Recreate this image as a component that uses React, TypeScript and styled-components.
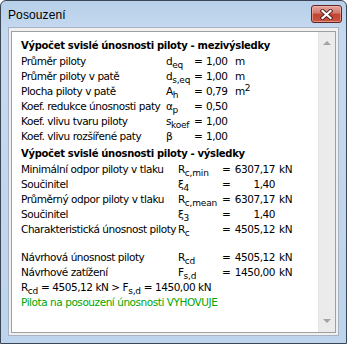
import React from 'react';
import styled, {createGlobalStyle} from "styled-components";

const GlobalStyle = createGlobalStyle`
  html, body {
    margin: 0;
    padding: 0;
    background: #ffffff;
  }
`

const Sub = styled.sub`
  font-size: 9px;
  letter-spacing: -0.2px;
  vertical-align: -3px;
  line-height: 0;
`

const Sup = styled.sup`
  font-size: 9px;
  vertical-align: 4px;
  line-height: 0;
`

type Row = {
    label: string
    sym: React.ReactNode
    value: string
    unit?: React.ReactNode
}

const mezi: Row[] = [
    {label: 'Průměr piloty', sym: <>d<Sub>eq</Sub></>, value: '1,00', unit: 'm'},
    {label: 'Průměr piloty v patě', sym: <>d<Sub>s,eq</Sub></>, value: '1,00', unit: 'm'},
    {label: 'Plocha piloty v patě', sym: <>A<Sub>h</Sub></>, value: '0,79', unit: <>m<Sup>2</Sup></>},
    {label: 'Koef. redukce únosnosti paty', sym: <>α<Sub>p</Sub></>, value: '0,50'},
    {label: 'Koef. vlivu tvaru piloty', sym: <>s<Sub>koef</Sub></>, value: '1,00'},
    {label: 'Koef. vlivu rozšířené paty', sym: 'β', value: '1,00'},
]

const vysledky: Row[] = [
    {label: 'Minimální odpor piloty v tlaku', sym: <>R<Sub>c,min</Sub></>, value: '6307,17', unit: 'kN'},
    {label: 'Součinitel', sym: <>ξ<Sub>4</Sub></>, value: '1,40'},
    {label: 'Průměrný odpor piloty v tlaku', sym: <>R<Sub>c,mean</Sub></>, value: '6307,17', unit: 'kN'},
    {label: 'Součinitel', sym: <>ξ<Sub>3</Sub></>, value: '1,40'},
    {label: 'Charakteristická únosnost piloty', sym: <>R<Sub>c</Sub></>, value: '4505,12', unit: 'kN'},
]

const navrh: Row[] = [
    {label: 'Návrhová únosnost piloty', sym: <>R<Sub>cd</Sub></>, value: '4505,12', unit: 'kN'},
    {label: 'Návrhové zatížení', sym: <>F<Sub>s,d</Sub></>, value: '1450,00', unit: 'kN'},
]

const Rows = ({rows, wide}: { rows: Row[], wide?: boolean }) => (
    <Grid $wide={wide}>
        {rows.map((r, i) => (
            <React.Fragment key={i}>
                <Label>{r.label}</Label>
                <Sym>{r.sym}</Sym>
                <Eq>=</Eq>
                <Value $wide={wide}>{r.value}</Value>
                <Unit>{r.unit}</Unit>
            </React.Fragment>
        ))}
    </Grid>
)

const CloseIcon = () => (
    <svg width="13" height="11" viewBox="0 0 13 11">
        <path d="M2.5 2 L10.5 9 M10.5 2 L2.5 9" stroke="#5a2020" strokeWidth="4" strokeLinecap="square"/>
        <path d="M2.5 2 L10.5 9 M10.5 2 L2.5 9" stroke="#ffffff" strokeWidth="2.2" strokeLinecap="square"/>
    </svg>
)

const App = () => {
    return (
        <>
            <GlobalStyle/>
            <Window>
                <TitleBar>
                    <Title>Posouzení</Title>
                    <CloseButton><CloseIcon/></CloseButton>
                </TitleBar>
                <Client>
                    <TextBox>
                        <Content>
                            <Heading>Výpočet svislé únosnosti piloty - mezivýsledky</Heading>
                            <Rows rows={mezi}/>
                            <Heading $mt={3}>Výpočet svislé únosnosti piloty - výsledky</Heading>
                            <Rows rows={vysledky} wide/>
                            <Spacer/>
                            <Rows rows={navrh} wide/>
                            <Line $mt={1}>
                                R<Sub>cd</Sub> = 4505,12 kN &gt; F<Sub>s,d</Sub> = 1450,00 kN
                            </Line>
                            <Line $green>Pilota na posouzení únosnosti VYHOVUJE</Line>
                        </Content>
                        <ScrollBar>
                            <Arrow/>
                            <Arrow $down/>
                        </ScrollBar>
                    </TextBox>
                </Client>
            </Window>
        </>
    );
};

export default App;

// ---------------------------
const Window = styled.div`
  box-sizing: border-box;
  width: 347px;
  height: 344px;
  border: 1px solid #3a4656;
  border-radius: 6px 6px 0 0;
  background: linear-gradient(#b7cfe9, #c6daef 30px, #bed4ec);
  display: flex;
  flex-direction: column;
  padding: 0 7px 7px;
  font-family: "DejaVu Sans", "Liberation Sans", sans-serif;
`

const TitleBar = styled.div`
  height: 26px;
  flex: none;
  display: flex;
  align-items: flex-start;
  justify-content: space-between;
`

const Title = styled.div`
  font-family: "Liberation Sans", Arial, sans-serif;
  font-size: 12px;
  color: #000;
  margin-top: 7px;
  letter-spacing: 0.1px;
`

const CloseButton = styled.div`
  box-sizing: border-box;
  width: 31px;
  height: 18px;
  margin: 4px -3px 0 0;
  border: 1px solid #5e2424;
  border-radius: 3px;
  background: linear-gradient(#e5a69d, #d2776b 45%, #c2432f 50%, #c9553f);
  display: flex;
  align-items: center;
  justify-content: center;
  box-shadow: inset 0 0 0 1px rgba(255, 200, 190, 0.5);
`

const Client = styled.div`
  flex: 1;
  box-sizing: border-box;
  background: #f0f0f0;
  border: 1px solid #a7b3c2;
  padding: 3px 2px 2px 2px;
  display: flex;
  min-height: 0;
`

const TextBox = styled.div`
  flex: 1;
  display: flex;
  border: 1px solid #a0a0a0;
  background: #ffffff;
  min-height: 0;
`

const Content = styled.div`
  flex: 1;
  padding: 6px 0 0 9px;
  font-size: 10.5px;
  letter-spacing: -0.45px;
  color: #000;
`

const Heading = styled.div<{ $mt?: number }>`
  font-weight: bold;
  font-size: 10px;
  line-height: 15px;
  margin-top: ${p => p.$mt ?? 0}px;
  white-space: nowrap;
  letter-spacing: -0.3px;
`

const Grid = styled.div<{ $wide?: boolean }>`
  display: grid;
  grid-template-columns: ${p => p.$wide ? '157px 44px 11px 42px auto' : '145px 28px 12px 25px auto'};
  grid-auto-rows: 15px;
  align-items: center;
  white-space: nowrap;
`

const Label = styled.span``

const Sym = styled.span``

const Eq = styled.span``

const Value = styled.span<{ $wide?: boolean }>`
  text-align: ${p => p.$wide ? 'right' : 'left'};
`

const Unit = styled.span`
  padding-left: 4px;
`

const Spacer = styled.div`
  height: 13px;
`

const Line = styled.div<{ $mt?: number, $green?: boolean }>`
  line-height: 15px;
  margin-top: ${p => p.$mt ?? 0}px;
  color: ${p => p.$green ? '#00a600' : '#000'};
  white-space: nowrap;
`

const ScrollBar = styled.div`
  width: 17px;
  flex: none;
  background: #ebebeb;
  border-left: 1px solid #e4e4e4;
  display: flex;
  flex-direction: column;
  justify-content: space-between;
  align-items: center;
  padding: 9px 0 9px;
  box-sizing: border-box;
`

const Arrow = styled.div<{ $down?: boolean }>`
  width: 0;
  height: 0;
  border-left: 4px solid transparent;
  border-right: 4px solid transparent;
  ${p => p.$down
    ? 'border-top: 4px solid #a3a3a3;'
    : 'border-bottom: 4px solid #a3a3a3;'}
`
